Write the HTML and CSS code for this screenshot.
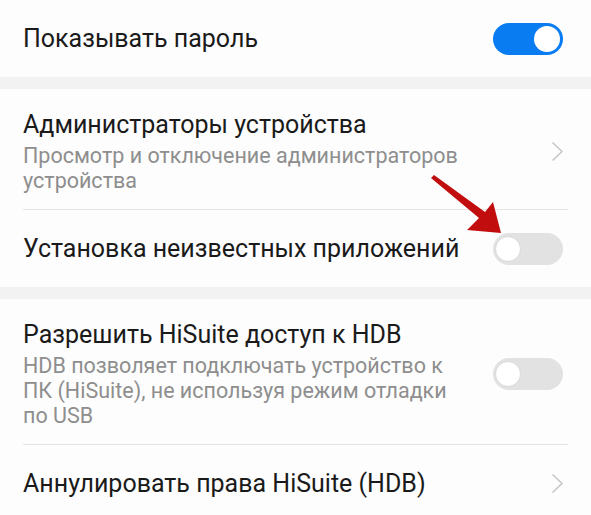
FILE: index.html
```html
<!DOCTYPE html>
<html lang="ru">
<head>
  <meta charset="UTF-8">
  <meta name="viewport" content="width=device-width, initial-scale=1.0">
  <title>Безопасность</title>
  <link rel="stylesheet" href="styles.css">
</head>
<body>
  <div class="screen">
    <div class="group">
      <div class="row row-single">
        <div class="title">Показывать пароль</div>
        <span class="switch switch-on"><span class="knob"></span></span>
      </div>
    </div>

    <div class="gap"></div>

    <div class="group">
      <div class="row row-multi">
        <div class="text">
          <div class="title">Администраторы устройства</div>
          <div class="summary">Просмотр и отключение администраторов устройства</div>
        </div>
        <svg class="chevron" width="13" height="21" viewBox="0 0 13 21">
          <polyline points="1.5,1.5 11,10.5 1.5,19.5" />
        </svg>
      </div>
      <div class="divider"></div>
      <div class="row row-single">
        <div class="title">Установка неизвестных приложений</div>
        <span class="switch"><span class="knob"></span></span>
      </div>
    </div>

    <div class="gap"></div>

    <div class="group">
      <div class="row row-multi">
        <div class="text">
          <div class="title">Разрешить HiSuite доступ к HDB</div>
          <div class="summary">HDB позволяет подключать устройство к ПК (HiSuite), не используя режим отладки по USB</div>
        </div>
        <span class="switch"><span class="knob"></span></span>
      </div>
      <div class="divider"></div>
      <div class="row row-single">
        <div class="title">Аннулировать права HiSuite (HDB)</div>
        <svg class="chevron" width="13" height="21" viewBox="0 0 13 21">
          <polyline points="1.5,1.5 11,10.5 1.5,19.5" />
        </svg>
      </div>
    </div>

    <!-- красная стрелка поверх списка -->
    <svg class="arrow" width="591" height="515" viewBox="0 0 591 515">
      <polygon points="431,178 434,175 485,212 493,202 501,233 467,230 479,218" />
    </svg>
  </div>
</body>
</html>
```

FILE: styles.css
```css
* {
  padding: 0;
  margin: 0;
  box-sizing: border-box;
}
body {
  background-color: #fdfdfd;
  font-family: Roboto, "Noto Sans", sans-serif;
  overflow: hidden;
}
.screen {
  position: relative;
  width: 591px;
  height: 515px;
  overflow: hidden;
}
.gap {
  height: 12px;
  background-color: #f2f2f2;
}
.row {
  display: flex;
  align-items: center;
  justify-content: space-between;
  padding: 0 27px 0 23px;
}
.row-single {
  height: 77px;
}
.row-multi {
  padding-top: 21px;
  padding-bottom: 16px;
}
.text {
  width: 450px;
}
.title {
  font-size: 25px;
  line-height: 30px;
  color: #1a1a1a;
}
.summary {
  margin-top: 3px;
  font-size: 21.5px;
  line-height: 25px;
  color: #8e8e8e;
}
.divider {
  height: 1px;
  margin: 0 23px;
  background-color: #e4e4e4;
}
.chevron {
  flex-shrink: 0;
}
.chevron polyline {
  fill: none;
  stroke: #c6c6c6;
  stroke-width: 1.6;
  stroke-linejoin: round;
}
.switch {
  flex-shrink: 0;
  position: relative;
  width: 70px;
  height: 32px;
  margin-right: 1px;
  border-radius: 16px;
  background-color: #e2e2e2;
}
.switch .knob {
  position: absolute;
  top: 3px;
  left: 2px;
  width: 26px;
  height: 26px;
  border-radius: 50%;
  background-color: #fff;
  border: 1px solid #d9d9d9;
}
.switch-on {
  background-color: #0a7cf2;
}
.switch-on .knob {
  left: auto;
  right: 3px;
  border: none;
}
.arrow {
  position: absolute;
  left: 0;
  top: 0;
  pointer-events: none;
}
.arrow polygon {
  fill: #c10d0d;
}
```
